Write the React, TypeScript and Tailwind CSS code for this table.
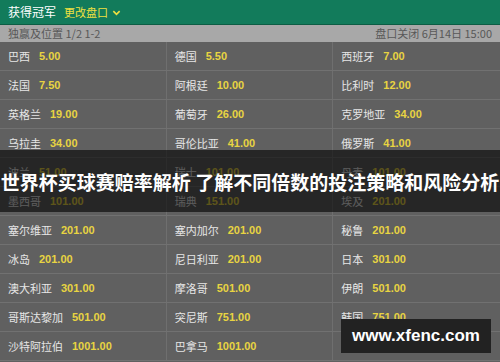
const rows: [string, string][][] = [
  [['巴西', '5.00'], ['德国', '5.50'], ['西班牙', '7.00']],
  [['法国', '7.50'], ['阿根廷', '10.00'], ['比利时', '12.00']],
  [['英格兰', '19.00'], ['葡萄牙', '26.00'], ['克罗地亚', '34.00']],
  [['乌拉圭', '34.00'], ['哥伦比亚', '41.00'], ['俄罗斯', '41.00']],
  [['波兰', '51.00'], ['瑞士', '101.00'], ['丹麦', '101.00']],
  [['墨西哥', '101.00'], ['瑞典', '151.00'], ['埃及', '201.00']],
  [['塞尔维亚', '201.00'], ['塞内加尔', '201.00'], ['秘鲁', '201.00']],
  [['冰岛', '201.00'], ['尼日利亚', '201.00'], ['日本', '301.00']],
  [['澳大利亚', '301.00'], ['摩洛哥', '501.00'], ['伊朗', '501.00']],
  [['哥斯达黎加', '501.00'], ['突尼斯', '751.00'], ['韩国', '751.00']],
  [['沙特阿拉伯', '1001.00'], ['巴拿马', '1001.00'], ['', '']],
];

const font = { fontFamily: '"Noto Sans CJK SC", "Liberation Sans", sans-serif' };

export default function App() {
  return (
    <div
      className="relative w-[500px] h-[362px] overflow-hidden bg-[#606060]"
      style={font}
    >
      <div className="h-[25px] bg-[#127b5b] border-b border-[#0c5d44] flex items-center px-2 gap-2">
        <span className="text-[12px] text-white">获得冠军</span>
        <span className="flex items-center gap-1 text-[11px] text-[#f0e040]">
          更改盘口
          <svg width="9" height="9" viewBox="0 0 10 10" fill="none">
            <path d="M1.5 3.5 L5 7 L8.5 3.5" stroke="#f0e040" strokeWidth="1.8" />
          </svg>
        </span>
      </div>
      <div className="h-[17px] bg-[#a8a8a8] flex items-center justify-between px-2 text-[11px] text-[#585858]">
        <span>独赢及位置 1/2 1-2</span>
        <span>盘口关闭 6月14日 15:00</span>
      </div>
      {rows.map((row, i) => (
        <div key={i} className="grid grid-cols-3 h-[29px] border-b border-[#717171]">
          {row.map(([name, odds], j) => (
            <div
              key={j}
              className={`flex items-center gap-[9px] pl-2 ${j < 2 ? 'border-r border-[#6f6f6f]' : ''}`}
            >
              <span className="text-[11px] text-[#e6e6e6]">{name}</span>
              <span
                className="text-[11px] font-bold text-[#e8d442]"
                style={{ fontFamily: '"Liberation Sans", sans-serif' }}
              >
                {odds}
              </span>
            </div>
          ))}
        </div>
      ))}

      <div className="absolute left-0 right-0 top-[150px] h-[62px] bg-black/60 flex items-center justify-center">
        <span className="whitespace-nowrap text-[19px] font-bold text-white leading-none">
          世界杯买球赛赔率解析 了解不同倍数的投注策略和风险分析
        </span>
      </div>

      <div className="absolute left-[341px] top-[319px] w-[150px] h-[34px] bg-[#222222] flex items-center justify-center">
        <span
          className="text-[17px] font-bold text-white"
          style={{ fontFamily: '"Liberation Sans", sans-serif' }}
        >
          www.xfenc.com
        </span>
      </div>
    </div>
  );
}
